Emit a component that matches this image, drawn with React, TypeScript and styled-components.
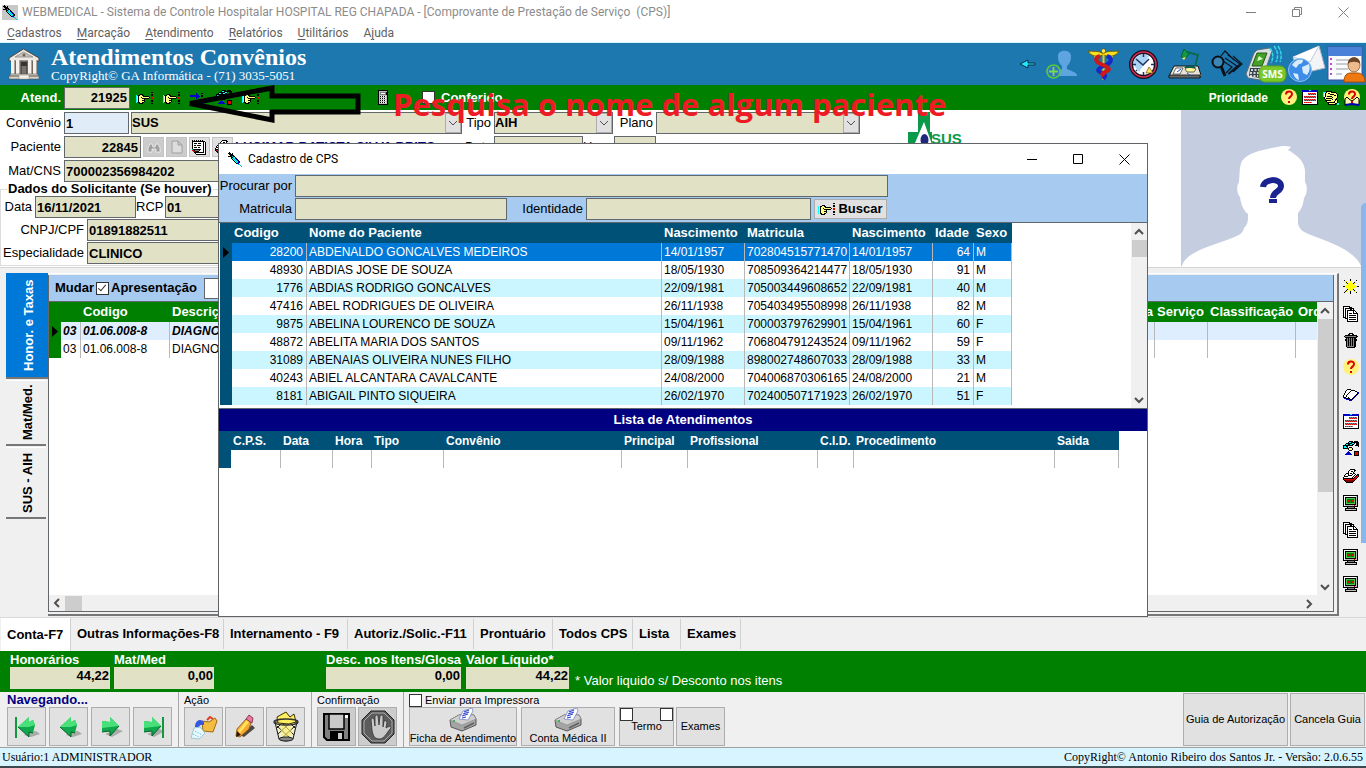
import React from "react";
import styled, { createGlobalStyle, css } from "styled-components";

const sans = `"Liberation Sans", Arial, sans-serif`;
const serif = `"Liberation Serif", "Times New Roman", serif`;
const ui = `Roboto, "Open Sans", sans-serif`;
const display = `"Open Sans", "Noto Sans", sans-serif`;
const c = {
  beige: "#e1e1c6",
  edge: "#62676b",
  sky: "#a6caf0",
  teal: "#005178",
  green: "#008000",
  face: "#f0f0f0",
  button: "#e1e1e1",
  navy: "#000080",
  select: "#0078d7",
};

const GlobalStyle = createGlobalStyle`
  *, *::before, *::after { box-sizing: border-box; }
  body { margin: 0; background: ${c.face}; font: 13px/16px ${sans}; color: #000; }
  button, input, select { font: inherit; color: inherit; border-radius: 0; margin: 0; }
  button { padding: 0; }
  svg { display: block; flex: none; }
  a { color: inherit; text-decoration: none; }
`;

/* ---------- pixel icons ---------- */

const palette: Record<string, string> = {
  k: "#000", w: "#fff", y: "#ffff80", Y: "#ffff00", r: "#e00000", c: "#00ffff", b: "#0000c8",
  g: "#808080", G: "#008000", l: "#c0c0c0", n: "#804020", t: "#00c8c8", L: "#50c850", R: "#800000",
};

function Pixels({ rows, size = 1 }: { rows: string[]; size?: number }) {
  const w = Math.max(...rows.map((r) => r.length));
  return (
    <svg width={w * size} height={rows.length * size} viewBox={`0 0 ${w} ${rows.length}`} shapeRendering="crispEdges" aria-hidden>
      {rows.flatMap((row, y) => {
        const out: React.ReactNode[] = [];
        let x = 0;
        while (x < row.length) {
          const ch = row[x];
          let n = 1;
          while (row[x + n] === ch) n++;
          if (palette[ch]) out.push(<rect key={`${x}-${y}`} x={x} y={y} width={n} height={1} fill={palette[ch]} />);
          x += n;
        }
        return out;
      })}
    </svg>
  );
}

const hand = [
  "...............kk",
  ".................",
  "....kkk........kk",
  "c.kkyykk.......kk",
  "cwkyyyykkkkkk....",
  "cwkyykyyyyyyyk.rr",
  "cwkyyykkkkkkk..rr",
  "cwkyyyyyk........",
  "cwkyyykkk......kk",
  "cwkyyyyyk......kk",
  "c.kkyykk.........",
  "...kkkk........kk",
];
const syringe = [
  "..k.............",
  ".kkk.k..........",
  "..kkkk..........",
  "...kkkk.........",
  ".kkkktkk........",
  "....kktck.......",
  "....kctcbk......",
  ".....kctcbk.....",
  "......kctcbk....",
  ".......kctcbk...",
  "........kctbk...",
  ".........kbb....",
  "...........tt...",
  ".............t..",
  "..............t.",
];
const docs = [
  "kkkkkkk.........",
  "kwwwwwkkk.......",
  "kwkkkkkkkkk.....",
  "kwkwwwwkkwk.....",
  "kwkwkkkkkkkk....",
  "kwkwkwwwwwkwk...",
  "kwkwkwwwwwkwwk..",
  "kwkwkwkkkwkkkkk.",
  "kwkwkwwwwwwwwwk.",
  "kwkwkwkkkkkkkwk.",
  "kwkwkwwwwwwwwwk.",
  "kkkwkwkkkkkkkwk.",
  "..kkkwwwwwwwwwk.",
  "....kwkkkkkkkwk.",
  "....kwwwwwwwwwk.",
  "....kkkkkkkkkkk.",
];
const trash = [
  "......kkkk......",
  ".....kk..kk.....",
  "..kkkkkkkkkkkk..",
  ".kgggggggggggkk.",
  "..kkkkkkkkkkkk..",
  "...kgkgkgkgkk...",
  "..kkgkgkgkgkkk..",
  "..kkgkgkgkgkkk..",
  "...kgkgkgkgkk...",
  "...kgkgkgkgkk...",
  "...kgkgkgkgkk...",
  "...kgkgkgkgkk...",
  "...kgkgkgkgkk...",
  "...kgggggggkk...",
  "....kkkkkkkk....",
];
const calendar = [
  "bbbbbbbccbbbbbbb",
  "bbbbbbbbbbbbbbbb",
  "kwwwwwwwwwwwwwwk",
  "kwwwwwrgrgrgrgwk",
  "kwwwwwgrgrgrgrwk",
  "kwwwwwwwwwwwwwwk",
  "kwrgrgrgrgrgrgwk",
  "kwgrgrgrgrgrgrwk",
  "kwwwwwwwwwwwwwwk",
  "kwrgrgrgrgrgrgwk",
  "kwgrgrgrgrgrgrwk",
  "kwwwwwwwwwwwwwwk",
  "kwrgrgrgrgwwwwwk",
  "kwwwwwwwwwwwwwwk",
  "kkkkkkkkkkkkkkkk",
];
const monitor = [
  "kkkkkkkkkkkkkkk.",
  "kwwwwwwwwwwwwlk.",
  "kwkkkkkkkkkkklk.",
  "kwkLLLLLLLLLklk.",
  "kwkLGGGGGGGLklk.",
  "kwkLGrrGrrGLklk.",
  "kwkLGrrGrrGLklk.",
  "kwkLGGGGGGGLklk.",
  "kwkLLLLLLLLLklk.",
  "kwkkkkkkkkkkklk.",
  "kwlllllllllrllk.",
  "kkkkkkkkkkkkkkk.",
  "....kggggggk....",
  "..kkkkkkkkkkkk..",
  "..kllllllllllk..",
  "..kkkkkkkkkkkk..",
];
const shapes = [
  "......kkkk.kkkk.",
  ".....kcckkkkkkkk",
  "...kkkkkkcck.kkk",
  "..kcckkcckk..kkk",
  "kkkkkkkkkk..kkkk",
  "kcckk..........k",
  "kccck.kkk.......",
  "kkkkkkyyyk......",
  ".....kyyyk......",
  "......kkk.......",
  ".....b.....kkkkk",
  "....bbb....krrrk",
  "...bbbbb...krrrk",
  "..bbbbbbb..krrrk",
  "...........kkkkk",
];
const redPrinter = [
  ".......kkkkk....",
  "......kwwwwkk...",
  ".....kwwkkwk....",
  ".....kwwwwk.....",
  "...kkkwkkwkk....",
  "..kwwkwwwkwwk.kk",
  ".kwwwkkkkwwk.krk",
  ".kkkkwwwwwk.krrk",
  "kwwwwwwwwk.krrk.",
  "kkkkkkkkkkkrrk..",
  "krrrrrrrrrrrk...",
  ".kRRRRRRRRRk....",
  "..kRRRRRRRk.....",
  "...kkkkkkk......",
];
const sun = [
  ".......k........",
  ".k.....k.....k..",
  "..YY...Y....Y...",
  "..YkY..Y...kY...",
  "...YkYYYYYkY....",
  "....YYYYYYY.....",
  "...YYYYYYYYY....",
  "kkYYYYYYYYYYYYkk",
  "...YYYYYYYYY....",
  "....YYYYYYY.....",
  "....kYYYYYk.....",
  "...kY..Y..Yk....",
  "..kY...k...YY...",
  ".k.....k.....k..",
  ".......k........",
];
const book = [
  "................",
  "....kkkk........",
  "...kwwwwkkkk....",
  "..kwwwwkwwwwkk..",
  "..kwwwkwwwwwwwkb",
  ".kwwwkwwwwwwwwkb",
  ".kwwkwwwwwwwwkb.",
  "kwwkwwwwwwwwkb..",
  "kwwkwwwwwwwkb...",
  "bkkwwkwwwwkb....",
  ".bbkkkkwwkb.....",
  "...bbbbkkb......",
  "......bbb.......",
];
const goBlue = [
  "......b....kk...",
  "......bb........",
  "bbbbbbbbb..kk...",
  "bbbbbbbbbb.kk...",
  "......bbb.......",
  "......b....nn...",
  "...........nn...",
  "................",
  "...........kk...",
  "...........kk...",
];
const notepad = [
  "k.k.k.k.k.k.....",
  "kkkkkkkkkkkkk...",
  "kwwwwwwwwwwkwk..",
  "kwkkkwkkkwwkwk..",
  "kwwwwwwwwwwkwk..",
  "kwkkwkkkkwwkwk..",
  "kwwwwwwwwwwkwk..",
  "kwkkkwkkwwwkwk..",
  "kwwwwwwwwwwkwk..",
  "tkkkkkkkkwwkwk..",
  "rrkggggkwwwkwk..",
  ".rrkkkkwwwwkwk..",
  "..kkkkkkkkkkwk..",
  "...kwwwwwwwwwk..",
  "....kkkkkkkkkk..",
];
const calculator = [
  "kkkkkkkkkk",
  "kllllllllk",
  "klggggggkk",
  "klgwwwwgkk",
  "klggggggkk",
  "kllllllllk",
  "klkwkwkwlk",
  "kllllllllk",
  "klkwkwkwlk",
  "kllllllllk",
  "klkwkwkwlk",
  "kllllllllk",
  "klkwkwkwlk",
  "kllllllllk",
  "kkkkkkkkkk",
];
const pointHand = [
  "...kkkkkk.......",
  "ccckyyyykkkkk...",
  "cwkyykkyyyyyyk..",
  "cwkyyyykkkkyyyk.",
  "cwkyyyyyyyykkyk.",
  "cwkykkkkkyyyyyk.",
  ".kyyyyyyykyyyyk.",
  ".kykkkkkkyyyyk..",
  "..kyyyyyykyykk..",
  "..kkkkkkyyyykyk.",
  "...kyyyyyyykyyk.",
  "....kkkkkkkkyyk.",
  ".....kyyyyyykkcc",
  ".....kkkkkkkk.cc",
];

function Question({ reader = false }: { reader?: boolean }) {
  return (
    <svg width="16" height="17" viewBox="0 0 16 17" aria-hidden>
      <circle cx="8" cy="8" r="8" fill="#fff27a" />
      {reader && <path d="M1 16V10l2-2 2 2 3 2 3-2 2-2 2 2v6l-7-1z" fill="#fff8b0" stroke="#000" strokeWidth="1" />}
      {reader && <path d="M1 16l7-1 7 1" stroke="#0000b0" strokeWidth="2" fill="none" />}
      <path d="M5 5.500C5 1.500 11 1.500 11 5c0 2.600-3 2.600-3 5" fill="none" stroke="#d80000" strokeWidth="2" />
      <rect x="7" y="12" width="2" height="2" fill="#d80000" />
    </svg>
  );
}

function Temple() {
  return (
    <svg width="32" height="32" viewBox="0 0 32 32" aria-hidden>
      <path d="M1 10L15.500 1 31 10v3H1z" fill="#ece8e2" stroke="#4a4540" />
      <path d="M7 9l8.500-5L25 9z" fill="#c8c2ba" stroke="#857f78" strokeWidth=".7" />
      <circle cx="16" cy="7" r="1.500" fill="#6a645e" />
      <path d="M3 13h26v13H3z" fill="#6e6861" />
      {[3, 8, 20, 25].map((x) => (
        <g key={x}>
          <rect x={x} y="12" width="4" height="15" fill="#f4f1ec" />
          <rect x={x + 3} y="12" width="1" height="15" fill="#aaa49c" />
        </g>
      ))}
      <rect x="13" y="14" width="6" height="12" fill="#37332f" />
      <rect x="13.500" y="18" width="5" height="8" fill="#f0ede8" opacity=".35" />
      <path d="M2 26h28v2H2zM1 28h30v3H1z" fill="#d9d4cc" stroke="#5b554e" strokeWidth=".6" />
      <path d="M11 27h10v4H11z" fill="#f2efe9" stroke="#8d877f" strokeWidth=".5" />
    </svg>
  );
}

const Arrow = () => (
  <svg width="17" height="10" viewBox="0 0 17 10" aria-hidden>
    <path d="M1 5l8-4v3h7v2H9v3z" fill="#20e8f8" stroke="#0a2a48" strokeWidth="1" />
  </svg>
);
const AddPerson = () => (
  <svg width="32" height="32" viewBox="0 0 32 32" aria-hidden>
    <path d="M12 8c0-7 13-7 13 0 0 6-2 8-4 10v3c4 2 9 3 10 6v1H9c1-4 3-5 7-7v-3c-2-2-4-4-4-10z" fill="#5ea4e0" />
    <circle cx="7.500" cy="23.500" r="6.500" fill="#3a6fc8" stroke="#4ccc3c" strokeWidth="1.700" />
    <path d="M7.500 19v9M3 23.500h9" stroke="#6ee048" strokeWidth="1.800" />
  </svg>
);
const Caduceus = () => (
  <svg width="31" height="33" viewBox="0 0 31 33" aria-hidden>
    <path d="M15 7C10 9 3 9 0 3c5 1 11-1 15 3 4-4 11-2 16-3-3 6-10 6-16 4z" fill="#f8e020" stroke="#5a4a00" strokeWidth=".8" />
    <path d="M3 4l8 3M28 4l-8 3M6 9l6-1M25 9l-6-1" stroke="#f8e020" strokeWidth="1" />
    <path d="M15.500 3v29" stroke="#f0c800" strokeWidth="2" />
    <circle cx="15.500" cy="3" r="2.200" fill="#ffe850" stroke="#504000" strokeWidth=".6" />
    <path d="M19 8c6 2 5 7-3 10s-7 5-2 7 3 4 1 6" fill="none" stroke="#1828c8" strokeWidth="4" />
    <path d="M12 8c-6 2-5 6 3 9s7 5 2 7-2 3-1 4" fill="none" stroke="#d01818" strokeWidth="4" />
  </svg>
);
const Clock = () => (
  <svg width="29" height="29" viewBox="0 0 29 29" aria-hidden>
    <circle cx="14.500" cy="14.500" r="12.500" fill="#fff" stroke="#14141e" strokeWidth="4" />
    <circle cx="14.500" cy="14.500" r="12.500" fill="none" stroke="#e02858" strokeWidth="1.500" />
    <path d="M4 14A10.500 10.500 0 0120 6L10 22z" fill="#a8d4f4" />
    <path d="M7 9l7 6 6-6M14.500 4v3M14.500 22v3M4 14.500h3M22 14.500h3M8 20l-1 1" stroke="#203060" strokeWidth="1.500" fill="none" />
    <path d="M17 23l3-6 4 6z" fill="#ffe860" stroke="#705000" strokeWidth=".7" />
  </svg>
);
const Desk = () => (
  <svg width="33" height="32" viewBox="0 0 33 32" aria-hidden>
    <path d="M6 18h24l3 9v2H1l1-3z" fill="#e6e2da" stroke="#141414" />
    <path d="M1 27h31v3H1z" fill="#686868" stroke="#101010" strokeWidth=".8" />
    <path d="M8 20h7l-3 6H5z" fill="#fff" stroke="#333" strokeWidth=".7" />
    <path d="M17 21c4-3 8-1 11 0l-2 3h-7z" fill="#fff8a0" stroke="#302a10" strokeWidth=".7" />
    <path d="M18 18h8l2 2H16z" fill="#0c5c4c" />
    <path d="M13 9l3-8 5 5-3 4z" fill="#149848" stroke="#062" />
    <path d="M19 4l11 3-3 11" fill="none" stroke="#0a6a50" strokeWidth="2" />
    <path d="M14 10l2 2 2-3" fill="#ffef60" />
    <path d="M19 25l4 3M9 24l4-3" stroke="#1850c0" strokeWidth="1" />
  </svg>
);
const SearchPages = () => (
  <svg width="32" height="28" viewBox="0 0 32 28" aria-hidden>
    <path d="M10 6l4-5 9 9M17 5l12 9-11 10M14 8l12 8-9 8M12 11l9 6-6 6M22 6l9 8-9 8" fill="none" stroke="#0b1420" strokeWidth="1.200" />
    <circle cx="7" cy="12" r="5.500" fill="#3a86b4" stroke="#0b1018" strokeWidth="2" />
    <path d="M10 16l4 10" stroke="#0b1018" strokeWidth="3" />
  </svg>
);
const Sms = () => (
  <svg width="41" height="38" viewBox="0 0 41 38" aria-hidden>
    <path d="M11 5l12-2 3 3-9 26-3 3-12-2-2-4L8 8z" fill="#d8dee2" stroke="#5a6a72" />
    <path d="M11 8h10l-5 13H6z" fill="#44a028" stroke="#245c14" />
    <path d="M13 11l4 3-6 2z" fill="#d8ffc0" />
    <path d="M4 23h12l-3 10-10-2z" fill="#39444a" />
    <path d="M5 25h9M4 28h9M4 31h8" stroke="#fff" strokeWidth="1.500" strokeDasharray="2 1.500" />
    <path d="M24 3q5 7 1 15M28 1q6 8 2 16M32 1q5 8 2 16" stroke="#30d8e8" strokeWidth="1.500" fill="none" strokeDasharray="4 1" />
    <rect x="13" y="21" width="27" height="16" rx="6" fill="#7ac828" stroke="#5aa018" />
    <text x="26.500" y="33" fontFamily={display} fontSize="10" fontWeight="700" fill="#fff" textAnchor="middle">SMS</text>
  </svg>
);
const MailGlobe = () => (
  <svg width="38" height="38" viewBox="0 0 38 38" aria-hidden>
    <path d="M5 12L31 1l6 22-26 6z" fill="#f2f4f8" stroke="#b0b8c8" />
    <path d="M5 12l17 5 9-16" fill="#fff" stroke="#c0c8d8" />
    <circle cx="12" cy="25" r="11.500" fill="#3c8ce8" stroke="#8cc0f4" />
    <path d="M4 20q5-7 11-5 0 4-4 4l-3 4zM14 22l7-3q2 6-2 11l-4-2zM5 28l5 1 1 6q-4-1-6-7z" fill="#d8ecfc" />
  </svg>
);
const Card = () => (
  <svg width="39" height="37" viewBox="0 0 39 37" aria-hidden>
    <rect x="1" y="1" width="34" height="33" fill="#fafbfd" stroke="#3c50a0" />
    <rect x="1" y="1" width="34" height="9" fill="#4a80d8" />
    <path d="M3 13h2M3 18h2M3 23h2M3 28h2" stroke="#b850c8" strokeWidth="2" />
    <path d="M9 14h18M9 18h16M9 23h12M9 28h6" stroke="#c8ccd2" strokeWidth="2" />
    <path d="M17 36c0-7 3-9 7-9h6c5 0 8 3 8 9z" fill="#f07810" stroke="#a84c00" />
    <ellipse cx="27" cy="19" rx="6" ry="7" fill="#eebb8c" stroke="#8c5a30" strokeWidth=".8" />
    <path d="M21 18c-1-9 13-9 12 0-2-3-10-3-12 0z" fill="#6e4626" />
  </svg>
);
const Sus = () => (
  <svg width="56" height="56" viewBox="0 0 56 56" aria-hidden>
    <path d="M10 2h12v20H10zM0 22h24v14H0z" fill="#0a9a4a" />
    <path d="M16 12l10 28H4z" fill="#fff" />
    <ellipse cx="16.500" cy="30" rx="4" ry="6" fill="#20287c" />
    <text x="23" y="34" fontFamily={sans} fontSize="15" fontWeight="700" fill="#0a9a4a">SUS</text>
  </svg>
);
const Portrait = () => (
  <svg width="185" height="156" viewBox="0 0 185 156" aria-hidden>
    <rect width="185" height="156" fill="#c5cde0" />
    <path
      d="M1 156c3-12 22-18 42-25 14-5 19-7 20-13 3-3 4-6 4-10V104c-5-4-7-10-8-17-3-3-4-11-1-15 1-10 0-14 3-21 7-10 26-12 40-15 4 0 7 0 9 1l-3 3c7 4 16 10 17 20v12c3 4 2 13-1 16-1 7-2 10-6 15v11c2 6 5 8 13 11 20 8 43 15 50 31z"
      fill="#fff"
    />
    <path d="M82 77c1-9 18-9 18-1 0 6-8 5-8 12" fill="none" stroke="#1a2490" strokeWidth="6" />
    <rect x="88" y="89" width="8" height="4" fill="#1a2490" />
  </svg>
);

const NavArrow = ({ dir, bar }: { dir: "left" | "right"; bar?: boolean }) => (
  <svg width="28" height="26" viewBox="0 0 28 26" aria-hidden>
    {dir === "left" ? (
      <>
        <path d="M15 18l8-1 4 3-9 3-7-2z" fill="#a8aca8" />
        <path d="M5 13L16 3v5l4-2 2 5-2 8-4-1v5z" fill="#10a84c" />
        <path d="M5 13L16 3v5l4-2 2 5-6 2z" fill="#48e078" />
        <path d="M5 13L16 23v-5l4 1" fill="none" stroke="#08602c" />
      </>
    ) : (
      <>
        <path d="M8 20l12-5 6 2-11 6z" fill="#a8aca8" />
        <path d="M5 7l8 1V3l9 9-9 10v-5l-8 1z" fill="#10a84c" />
        <path d="M5 7l8 1V3l9 9-9 1-8 1z" fill="#48e078" />
        <path d="M5 18l8-1v5l9-10" fill="none" stroke="#08602c" />
      </>
    )}
    {bar && <rect x={dir === "left" ? 2 : 23} y="3" width="2" height="21" fill="#10983c" />}
  </svg>
);
const NewDoc = () => (
  <svg width="30" height="28" viewBox="0 0 30 28" aria-hidden>
    <path d="M13 8l7 1 6-4 2 3-4 11-10-1z" fill="#f4bc40" stroke="#a06c10" />
    <path d="M18 7l3-3 3 2" stroke="#e04020" strokeWidth="2" fill="none" />
    <path d="M15 9c-6-5-9 1-9 5l4 1q0-4 5-3z" fill="#3458e0" />
    <path d="M5 15l6-1 5 6-6 6-8-1z" fill="#e8faff" stroke="#98c8d4" />
    <path d="M6 18l7 4M4 21l6 3" stroke="#58b8d0" strokeDasharray="1 1" />
  </svg>
);
const Pencil = () => (
  <svg width="26" height="28" viewBox="0 0 26 28" aria-hidden>
    <path d="M8 22l12-10 3 3-11 9z" fill="#4c4844" />
    <path d="M5 16L14 6l5 4-2 6-9 8-4-1z" fill="#f8a830" stroke="#805008" strokeWidth=".8" />
    <path d="M7 19l9-11" stroke="#ffe060" strokeWidth="3" />
    <path d="M14 6l3-4 4 3-1 5z" fill="#e878a0" stroke="#802040" strokeWidth=".8" />
    <path d="M5 18l4 4-5 2z" fill="#301808" />
  </svg>
);
const Basket = () => (
  <svg width="28" height="31" viewBox="0 0 28 31" aria-hidden>
    <path d="M3 11h22l-4 17q-7 4-14 0z" fill="#f4f0c8" stroke="#111" />
    <path d="M5 15l14 13M9 11l13 13M17 11l7 7M23 15L9 28M19 11L6 23M11 11l-7 7" stroke="#222" strokeWidth="1" />
    <path d="M8 16l5-3 6 3 1 8-9 2z" fill="#fff06c" opacity=".6" />
    <path d="M5 6l9-5 4 5 4-3 2 8-7 2-11-1z" fill="#ffef60" stroke="#3a3000" />
    <ellipse cx="14" cy="11" rx="12" ry="3" fill="none" stroke="#333" strokeWidth="1.500" />
    <ellipse cx="14" cy="28" rx="7" ry="2" fill="#888" stroke="#222" />
  </svg>
);
const Floppy = () => (
  <svg width="27" height="28" viewBox="0 0 27 28" aria-hidden>
    <path d="M1 1h25v26H4l-3-3z" fill="#808080" stroke="#000" strokeWidth="2" />
    <rect x="6" y="1" width="15" height="15" fill="#c8c8c8" stroke="#000" strokeWidth="1.500" />
    <rect x="7" y="18" width="14" height="9" fill="#000" />
    <rect x="15" y="20" width="4" height="6" fill="#c8c8c8" />
    <rect x="22" y="2" width="3" height="3" fill="#fff" />
  </svg>
);
const StopHand = () => (
  <svg width="34" height="34" viewBox="0 0 34 34" aria-hidden>
    <path d="M10 1h14l9 9v14l-9 9H10l-9-9V10z" fill="#5c5c5c" stroke="#222" />
    <path d="M11 3h12l8 8v12l-8 8H11l-8-8V11z" fill="none" stroke="#a8a8a8" />
    <path d="M10 9q2-2 3 0l1 7V6q2-2 3 0l1 9 1-9q2-2 3 0v11l1-6q2-1 3 1l-1 6c3-2 5-2 5 0-4 4-6 10-11 11-7 0-7-5-8-9z" fill="#cacaca" stroke="#333" strokeWidth=".8" />
  </svg>
);
const Printer = () => (
  <svg width="28" height="24" viewBox="0 0 28 24" aria-hidden>
    <path d="M1 12l9-5h15l2 4v6L13 23 2 19z" fill="#a4a4a4" stroke="#585858" />
    <path d="M1 12l9-5h15l2 4-14 6z" fill="#cfcfcf" stroke="#8a8a8a" strokeWidth=".6" />
    <path d="M10 11l4-8 9-3 1 3-5 9z" fill="#fff" stroke="#7888c0" strokeWidth=".8" />
    <path d="M15 4l5-2M14 6l6-2M13 8l6-2M13 10l4-1" stroke="#3048d0" strokeWidth="1.200" />
    <rect x="4" y="12" width="2" height="2" fill="#40b050" />
    <path d="M15 20l10-5" stroke="#606060" strokeWidth="1.500" />
  </svg>
);
const Chevron = ({ d }: { d: "up" | "down" | "left" | "right" }) => {
  const p = { up: "M1 7l4-4 4 4", down: "M1 3l4 4 4-4", left: "M7 1L3 5l4 4", right: "M3 1l4 4-4 4" }[d];
  return (
    <svg width="10" height="10" viewBox="0 0 10 10" aria-hidden>
      <path d={p} fill="none" stroke="#505050" strokeWidth="2" />
    </svg>
  );
};
const PickChevron = () => (
  <svg width="10" height="10" viewBox="0 0 10 10" aria-hidden>
    <path d="M1 3l4 4 4-4" fill="none" stroke="#505050" />
  </svg>
);

/* ---------- layout pieces ---------- */

const Page = styled.div`
  position: relative;
  min-height: 100vh;
  display: flex;
  flex-direction: column;
  overflow: hidden;
  border-bottom: 2px solid #3c4a50;
`;
const TitleBar = styled.header`
  display: flex;
  align-items: center;
  height: 24px;
  padding-left: 2px;
  gap: 4px;
  background: #fff;
  color: #8c8c8c;
  font: 12px/24px ${ui};
  white-space: pre;
`;
const AppIcon = styled.span`
  background: #c8c8c8;
  width: 16px;
  overflow: hidden;
`;
const WinControls = styled.div<{ $dark?: boolean }>`
  display: flex;
  margin-left: auto;
  color: ${(p) => (p.$dark ? "#000" : "#808080")};
`;
const WinButton = styled.button`
  display: grid;
  place-items: center;
  width: 46px;
  height: 22px;
  border: 0;
  background: none;
`;
const MenuBar = styled.nav`
  display: flex;
  gap: 15px;
  height: 19px;
  padding-left: 7px;
  background: #fff;
  color: #606060;
  font: 12px/18px ${ui};
  border-bottom: 1px solid #d8f4ff;
`;
const Mnemonic = styled.span`
  text-decoration: underline;
  text-underline-offset: 2px;
`;
const Banner = styled.div`
  display: flex;
  align-items: center;
  height: 42px;
  padding: 0 0 0 8px;
  gap: 11px;
  background: #1e78b0;
  color: #fff;
`;
const BannerTitle = styled.h1`
  margin: 0;
  font: bold 24px/24px ${serif};
`;
const BannerSub = styled.div`
  font: 13px/14px ${serif};
`;
const BannerTools = styled.div`
  display: flex;
  align-items: center;
  gap: 10px;
  margin-left: auto;
`;
const BannerTight = styled.div`
  display: flex;
  align-items: center;
  gap: 1px;
  margin-left: -7px;
`;
const PlainButton = styled.button`
  display: grid;
  place-items: center;
  border: 0;
  background: none;
`;
const GreenBar = styled.div`
  display: flex;
  align-items: center;
  height: 25px;
  padding-left: 4px;
  background: ${c.green};
  color: #fff;
  font-weight: bold;
`;
const Label = styled.label<{ $w: number }>`
  flex: none;
  width: ${(p) => p.$w}px;
  padding-right: 3px;
  text-align: right;
  white-space: nowrap;
`;
const Field = styled.input<{ $w: number; $right?: boolean; $bg?: string; $flat?: boolean }>`
  flex: none;
  width: ${(p) => p.$w}px;
  height: 22px;
  padding: ${(p) => (p.$flat ? "0 1px 5px" : "0 2px 0 1px")};
  border: ${(p) => (p.$flat ? "0" : `1px solid ${c.edge}`)};
  background: ${(p) => p.$bg ?? c.beige};
  color: #000;
  font-weight: bold;
  text-align: ${(p) => (p.$right ? "right" : "left")};
  outline: 0;
`;
const Tools = styled.div`
  display: flex;
  align-items: center;
  gap: 10px;
  padding-left: 6px;
`;
const CalcSlot = styled.div`
  padding-left: 119px;
`;
const Check = styled.input.attrs({ type: "checkbox" })`
  appearance: none;
  flex: none;
  width: 13px;
  height: 13px;
  border: 1px solid #333;
  background: #fff;
  &:checked::after {
    content: "";
    display: block;
    width: 4px;
    height: 8px;
    margin: 0 0 0 3px;
    border: solid #333;
    border-width: 0 1px 1px 0;
    transform: rotate(40deg);
  }
`;
const Conferido = styled.label`
  display: flex;
  align-items: center;
  gap: 6px;
  padding-left: 34px;
`;
const Priority = styled.div`
  display: flex;
  align-items: center;
  gap: 5px;
  margin-left: auto;
  padding-right: 6px;
  font-size: 12px;
`;
const PriorityText = styled.span`
  margin-right: 8px;
`;

const FormArea = styled.section`
  display: flex;
  height: 157px;
  background: #fff;
`;
const FormColumn = styled.div`
  flex: none;
  width: 900px;
  padding-top: 2px;
`;
const FormRow = styled.div<{ $tight?: boolean }>`
  display: flex;
  align-items: center;
  height: 22px;
  margin-bottom: ${(p) => (p.$tight ? 1 : 2)}px;
`;
const PickBox = styled.span<{ $w: number; $gap?: number }>`
  position: relative;
  flex: none;
  width: ${(p) => p.$w}px;
  height: 22px;
  margin-left: ${(p) => p.$gap ?? 0}px;
  svg {
    position: absolute;
    right: 4px;
    top: 6px;
    z-index: 1;
    pointer-events: none;
  }
  &::after {
    content: "";
    position: absolute;
    inset: 1px 1px 1px auto;
    width: 16px;
    background: ${c.button};
    border: 1px solid #adadad;
    pointer-events: none;
  }
`;
const Pick = styled.select`
  appearance: none;
  width: 100%;
  height: 22px;
  padding: 0;
  border: 1px solid ${c.edge};
  background: ${c.beige};
  font-weight: bold;
  outline: 0;
`;
const MiniButton = styled.button<{ $off?: boolean }>`
  display: grid;
  place-items: center;
  width: 21px;
  height: 20px;
  margin-left: 2px;
  border: 1px solid #c4c4c4;
  background: ${(p) => (p.$off ? "#cccccc" : c.button)};
  overflow: hidden;
`;
const PatientName = styled.strong`
  width: 232px;
  padding-left: 2px;
  color: ${c.navy};
  white-space: nowrap;
`;
const Requester = styled.fieldset`
  margin: -2px 0 0;
  padding: 0;
  border: 1px solid #dcdcdc;
  min-width: 0;
  legend {
    margin-left: 6px;
    padding: 0 1px;
    font-weight: bold;
    line-height: 14px;
  }
`;
const LogoSlot = styled.div`
  padding-left: 8px;
`;
const PhotoSlot = styled.div`
  margin-left: auto;
`;

const Work = styled.main`
  flex: 1;
  display: flex;
  min-height: 340px;
  padding: 5px 0 1px 4px;
  border-top: 1px solid #d4d4d4;
`;
const SideTabs = styled.div`
  display: flex;
  flex-direction: column;
  flex: none;
  width: 44px;
  gap: 1px;
  padding-left: 2px;
`;
const SideTab = styled.button<{ $h: number; $on?: boolean }>`
  width: ${(p) => (p.$on ? 42 : 40)}px;
  height: ${(p) => p.$h}px;
  padding-right: 4px;
  border: 0;
  border-top: 2px solid #777;
  border-bottom: 1px solid ${(p) => (p.$on ? c.select : "#fff")};
  background: ${(p) => (p.$on ? c.select : c.face)};
  color: ${(p) => (p.$on ? "#fff" : "#000")};
  font-weight: bold;
  writing-mode: vertical-rl;
  rotate: 180deg;
`;
const Panel = styled.div`
  flex: 1;
  min-width: 0;
  display: flex;
  padding: 1px 3px 2px 0;
  border-right: 2px solid #777;
  border-bottom: 2px solid #777;
  border-top: 1px solid #fff;
`;
const PanelInner = styled.div`
  flex: 1;
  min-width: 0;
  display: flex;
  flex-direction: column;
  border: 1px solid ${c.edge};
  border-top: 0;
  background: #fff;
`;
const PanelBar = styled.div`
  display: flex;
  align-items: center;
  gap: 2px;
  height: 27px;
  padding-left: 6px;
  background: ${c.sky};
  border-bottom: 1px solid ${c.edge};
  font-weight: bold;
`;
const PanelBox = styled.input`
  width: 120px;
  height: 21px;
  margin-left: 5px;
  border: 1px solid ${c.edge};
  background: #fff;
`;
const GridArea = styled.div`
  flex: 1;
  display: flex;
  min-height: 0;
`;
const GridMain = styled.div`
  flex: 1;
  min-width: 0;
`;

const Grid = styled.table<{ $head: string; $headH: number; $headSize: number; $full?: boolean }>`
  table-layout: fixed;
  border-spacing: 0;
  align-self: flex-start;
  width: ${(p) => (p.$full ? "100%" : "auto")};
  th {
    height: ${(p) => p.$headH}px;
    padding: 0 2px;
    background: ${(p) => p.$head};
    color: #fff;
    font-size: ${(p) => p.$headSize}px;
    text-align: left;
    white-space: nowrap;
    overflow: hidden;
  }
  td {
    height: 18px;
    padding: 0 0 0 2px;
    border-right: 1px solid #b8b8b8;
    font-size: 12px;
    line-height: 18px;
    white-space: nowrap;
    overflow: hidden;
  }
  td:first-child {
    padding: 0 0 0 3px;
    border: 0;
    background: ${(p) => p.$head};
  }
`;
const ItemRow = styled.tr<{ $on?: boolean }>`
  td {
    background: ${(p) => (p.$on ? "#dfeeff" : "#fff")};
    font-weight: ${(p) => (p.$on ? "bold" : "normal")};
    font-style: ${(p) => (p.$on ? "italic" : "normal")};
  }
  td:last-child { border-right: 0; }
`;
const HeadRight = styled.th`
  && { text-align: right; }
`;
const PatientRow = styled.tr<{ $on?: boolean; $alt?: boolean }>`
  color: ${(p) => (p.$on ? "#fff" : "#000")};
  td {
    background: ${(p) => (p.$on ? c.select : p.$alt ? "#ccf6ff" : "#fff")};
  }
`;
const NumCell = styled.td`
  text-align: right;
  && { padding-right: 3px; }
`;
const Marker = () => (
  <svg width="6" height="11" viewBox="0 0 6 11" aria-hidden>
    <path d="M0 0l6 5.500L0 11z" />
  </svg>
);

const ScrollV = styled.div`
  display: flex;
  flex-direction: column;
  align-items: center;
  flex: none;
  width: 16px;
  background: ${c.face};
`;
const ScrollH = styled.div`
  display: flex;
  align-items: center;
  height: 16px;
  padding-right: 16px;
  background: ${c.face};
`;
const ScrollButton = styled.button<{ $end?: boolean }>`
  display: grid;
  place-items: center;
  width: 16px;
  height: 17px;
  border: 0;
  background: none;
  ${(p) => p.$end && css`margin: auto 0 0 auto;`}
`;
const Thumb = styled.div<{ $w: number; $h: number }>`
  width: ${(p) => p.$w}px;
  height: ${(p) => p.$h}px;
  background: #cdcdcd;
`;
const RightTools = styled.div`
  display: flex;
  flex-direction: column;
  flex: none;
  width: 27px;
  padding: 0 0 0 4px;
`;
const RightTool = styled.button`
  display: flex;
  align-items: center;
  width: 17px;
  height: 27px;
  border: 0;
  background: none;
`;

const TabBar = styled.div`
  display: flex;
  align-items: flex-start;
  height: 34px;
  padding: 0 1px;
  border-top: 1px solid #d8d8d8;
`;
const Tab = styled.button<{ $w: number; $on?: boolean }>`
  width: ${(p) => p.$w}px;
  height: ${(p) => (p.$on ? 33 : 30)}px;
  margin-top: ${(p) => (p.$on ? 0 : 1)}px;
  padding: 0 0 0 6px;
  border: 0;
  border-right: 1px solid #d0d0d0;
  background: ${(p) => (p.$on ? "#fff" : c.face)};
  font-weight: bold;
  text-align: left;
  white-space: nowrap;
`;
const Totals = styled.div`
  display: flex;
  align-items: flex-start;
  height: 41px;
  padding: 1px 0 0 10px;
  background: ${c.green};
  color: #fff;
`;
const Total = styled.label<{ $gap: number }>`
  display: flex;
  flex-direction: column;
  margin-right: ${(p) => p.$gap}px;
  font-weight: bold;
  line-height: 15px;
  white-space: nowrap;
`;
const TotalNote = styled.span`
  padding-top: 21px;
`;
const Actions = styled.div`
  display: flex;
  height: 56px;
  padding-left: 2px;
  font-size: 11px;
  border-bottom: 1px solid #a0a0a0;
`;
const Group = styled.div`
  padding: 1px 6px 0 5px;
  border-right: 1px solid #a8a8a8;
`;
const OpenGroup = styled(Group)`
  border: 0;
`;
const GroupName = styled.div<{ $strong?: boolean }>`
  height: 14px;
  line-height: 14px;
  ${(p) =>
    p.$strong &&
    css`
      color: ${c.navy};
      font-weight: bold;
      font-size: 13px;
    `}
`;
const SendTo = styled.label`
  display: flex;
  align-items: center;
  gap: 3px;
  height: 14px;
`;
const Buttons = styled.div<{ $gap?: number }>`
  display: flex;
  gap: ${(p) => p.$gap ?? 2}px;
`;
const ToolButton = styled.button<{ $w?: number; $h?: number; $off?: boolean }>`
  display: flex;
  flex-direction: column;
  align-items: center;
  justify-content: center;
  width: ${(p) => p.$w ?? 39}px;
  height: ${(p) => p.$h ?? 39}px;
  border: 1px solid #adadad;
  background: ${(p) => (p.$off ? "#cccccc" : c.button)};
  line-height: 13px;
  white-space: nowrap;
`;
const TermBox = styled.div`
  position: relative;
  input { position: absolute; top: 1px; left: 1px; }
  input + input { left: auto; right: 1px; }
`;
const GuideButtons = styled.div`
  display: flex;
  gap: 2px;
  margin-left: auto;
  padding: 1px 1px 0 0;
`;
const Status = styled.footer`
  display: flex;
  justify-content: space-between;
  height: 18px;
  padding: 0 3px 0 2px;
  background: #d8f4ff;
  font: 12px/18px ${serif};
`;

const PageScroll = styled.div`
  position: absolute;
  right: 0;
  top: 203px;
  width: 5px;
  height: 340px;
  border-radius: 5px 0 0 0;
  background: #8ab6ea;
`;
const ArrowMark = styled.div`
  position: absolute;
  left: 185px;
  top: 84px;
  pointer-events: none;
`;
const Note = styled.p`
  position: absolute;
  left: 393px;
  top: 86px;
  margin: 0;
  color: #ed1c24;
  font: bold 31px/36px ${display};
  white-space: nowrap;
  pointer-events: none;
`;

const Dialog = styled.section`
  position: absolute;
  left: 218px;
  top: 143px;
  display: flex;
  flex-direction: column;
  width: 930px;
  min-height: 474px;
  border: 1px solid #606468;
  background: #fff;
`;
const DialogTitle = styled.div`
  display: flex;
  align-items: center;
  gap: 5px;
  height: 30px;
  padding: 0 0 0 8px;
  font: 12px/30px ${ui};
`;
const SearchArea = styled.div`
  height: 48px;
  background: ${c.sky};
`;
const SearchRow = styled.div`
  display: flex;
  align-items: center;
  height: 23px;
`;
const SearchButton = styled.button`
  display: flex;
  align-items: center;
  justify-content: center;
  gap: 3px;
  width: 73px;
  height: 20px;
  margin-left: 3px;
  border: 1px solid #adadad;
  background: ${c.button};
  font-weight: bold;
`;
const PatientGrid = styled.div`
  display: flex;
  justify-content: space-between;
  height: 187px;
  padding-left: 1px;
  border-top: 1px solid ${c.edge};
  border-bottom: 1px solid ${c.edge};
`;
const ListTitle = styled.h2`
  margin: 0;
  background: ${c.navy};
  color: #fff;
  font: bold 13px/22px ${sans};
  text-align: center;
`;

/* ---------- data ---------- */

const patients = [
  ["28200", "ABDENALDO GONCALVES MEDEIROS", "14/01/1957", "702804515771470", "64", "M"],
  ["48930", "ABDIAS JOSE DE SOUZA", "18/05/1930", "708509364214477", "91", "M"],
  ["1776", "ABDIAS RODRIGO GONCALVES", "22/09/1981", "705003449608652", "40", "M"],
  ["47416", "ABEL RODRIGUES DE OLIVEIRA", "26/11/1938", "705403495508998", "82", "M"],
  ["9875", "ABELINA LOURENCO DE SOUZA", "15/04/1961", "700003797629901", "60", "F"],
  ["48872", "ABELITA MARIA DOS SANTOS", "09/11/1962", "706804791243524", "59", "F"],
  ["31089", "ABENAIAS OLIVEIRA NUNES FILHO", "28/09/1988", "898002748607033", "33", "M"],
  ["40243", "ABIEL ALCANTARA CAVALCANTE", "24/08/2000", "704006870306165", "21", "M"],
  ["8181", "ABIGAIL PINTO SIQUEIRA", "26/02/1970", "702400507171923", "51", "F"],
];
const visits: [string, number][] = [
  ["C.P.S.", 50], ["Data", 52], ["Hora", 39], ["Tipo", 72], ["Convênio", 178], ["Principal", 66],
  ["Profissional", 130], ["C.I.D.", 36], ["Procedimento", 201], ["Saida", 64],
];
const tabs: [string, number][] = [
  ["Conta-F7", 70], ["Outras Informações-F8", 153], ["Internamento - F9", 124], ["Autoriz./Solic.-F11", 126],
  ["Prontuário", 79], ["Todos CPS", 80], ["Lista", 48], ["Exames", 60],
];
const sideIcons: [string, React.ReactNode][] = [
  ["Novo", <Pixels rows={sun} />], ["Copiar", <Pixels rows={docs} />], ["Excluir", <Pixels rows={trash} />],
  ["Ajuda", <Question />], ["Livro", <Pixels rows={book} />], ["Agenda", <Pixels rows={calendar} />],
  ["Formas", <Pixels rows={shapes} />], ["Imprimir", <Pixels rows={redPrinter} />], ["Monitor", <Pixels rows={monitor} />],
  ["Documentos", <Pixels rows={docs} />], ["Tela 1", <Pixels rows={monitor} />], ["Tela 2", <Pixels rows={monitor} />],
];

function WindowControls({ dark }: { dark?: boolean }) {
  return (
    <WinControls $dark={dark}>
      <WinButton aria-label="Minimizar">
        <svg width="11" height="11"><path d="M0 5.500h10" stroke="currentColor" /></svg>
      </WinButton>
      <WinButton aria-label="Restaurar">
        <svg width="11" height="11" fill="none" stroke="currentColor">
          {dark ? <path d="M.5.500h9v9h-9z" /> : <path d="M.5 2.500h7v7h-7zM2.500 2.500v-2h7v7h-2" />}
        </svg>
      </WinButton>
      <WinButton aria-label="Fechar">
        <svg width="11" height="11"><path d="M.5.500l10 10M10.500.500l-10 10" stroke="currentColor" /></svg>
      </WinButton>
    </WinControls>
  );
}

function Combo({ id, value, w, gap }: { id: string; value: string; w: number; gap?: number }) {
  return (
    <PickBox $w={w} $gap={gap}>
      <Pick id={id} aria-label={id} defaultValue={value}>
        <option>{value}</option>
      </Pick>
      <PickChevron />
    </PickBox>
  );
}

function SearchDialog() {
  return (
    <Dialog role="dialog" aria-label="Cadastro de CPS">
      <DialogTitle>
        <Pixels rows={syringe} />
        Cadastro de CPS
        <WindowControls dark />
      </DialogTitle>
      <SearchArea>
        <SearchRow>
          <Label $w={76} htmlFor="procurar">Procurar por</Label>
          <Field $w={593} id="procurar" />
        </SearchRow>
        <SearchRow>
          <Label $w={76} htmlFor="matricula">Matricula</Label>
          <Field $w={212} id="matricula" />
          <Label $w={79} htmlFor="identidade">Identidade</Label>
          <Field $w={225} id="identidade" />
          <SearchButton>
            <Pixels rows={hand} />
            Buscar
          </SearchButton>
        </SearchRow>
      </SearchArea>
      <PatientGrid>
        <Grid $head={c.teal} $headH={20} $headSize={13}>
          <colgroup>
            {[12, 75, 355, 83, 105, 83, 41, 38].map((w, i) => <col key={i} width={w} />)}
          </colgroup>
          <thead>
            <tr>
              <th aria-label="Atual" />
              <th>Codigo</th><th>Nome do Paciente</th><th>Nascimento</th><th>Matricula</th>
              <th>Nascimento</th><th>Idade</th><th>Sexo</th>
            </tr>
          </thead>
          <tbody>
            {patients.map(([code, name, born, reg, age, sex], i) => (
              <PatientRow key={code} $on={i === 0} $alt={i % 2 === 0}>
                <td>{i === 0 && <Marker />}</td>
                <NumCell>{code}</NumCell>
                <td>{name}</td><td>{born}</td><td>{reg}</td><td>{born}</td>
                <NumCell>{age}</NumCell>
                <td>{sex}</td>
              </PatientRow>
            ))}
          </tbody>
        </Grid>
        <ScrollV>
          <ScrollButton aria-label="Acima"><Chevron d="up" /></ScrollButton>
          <Thumb $w={15} $h={17} />
          <ScrollButton $end aria-label="Abaixo"><Chevron d="down" /></ScrollButton>
        </ScrollV>
      </PatientGrid>
      <ListTitle>Lista de Atendimentos</ListTitle>
      <div>
        <Grid $head={c.teal} $headH={19} $headSize={12}>
          <colgroup>
            <col width={12} />
            {visits.map(([n, w]) => <col key={n} width={w} />)}
          </colgroup>
          <thead>
            <tr><th aria-label="Atual" />{visits.map(([n]) => <th key={n}>{n}</th>)}</tr>
          </thead>
          <tbody>
            <tr><td />{visits.map(([n]) => <td key={n} />)}</tr>
          </tbody>
        </Grid>
      </div>
    </Dialog>
  );
}

export default function App() {
  return (
    <Page>
      <GlobalStyle />
      <TitleBar>
        <AppIcon><Pixels rows={syringe} /></AppIcon>
        WEBMEDICAL - Sistema de Controle Hospitalar HOSPITAL REG CHAPADA - [Comprovante de Prestação de Serviço  (CPS)]
        <WindowControls />
      </TitleBar>
      <MenuBar>
        {["Cadastros", "Marcação", "Atendimento", "Relatórios", "Utilitários"].map((m) => (
          <a href="#menu" key={m}><Mnemonic>{m[0]}</Mnemonic>{m.slice(1)}</a>
        ))}
        <a href="#menu">A<Mnemonic>j</Mnemonic>uda</a>
      </MenuBar>
      <Banner>
        <Temple />
        <div>
          <BannerTitle>Atendimentos Convênios</BannerTitle>
          <BannerSub>CopyRight© GA Informática - (71) 3035-5051</BannerSub>
        </div>
        <BannerTools>
          <PlainButton aria-label="Voltar"><Arrow /></PlainButton>
          <PlainButton aria-label="Adicionar pessoa"><AddPerson /></PlainButton>
          <PlainButton aria-label="Médico"><Caduceus /></PlainButton>
          <PlainButton aria-label="Agenda"><Clock /></PlainButton>
          <PlainButton aria-label="Recepção"><Desk /></PlainButton>
          <PlainButton aria-label="Localizar"><SearchPages /></PlainButton>
          <BannerTight>
            <PlainButton aria-label="SMS"><Sms /></PlainButton>
            <PlainButton aria-label="E-mail"><MailGlobe /></PlainButton>
            <PlainButton aria-label="Cadastro"><Card /></PlainButton>
          </BannerTight>
        </BannerTools>
      </Banner>
      <GreenBar>
        <Label $w={60} htmlFor="atend">Atend.</Label>
        <Field $w={66} $right id="atend" defaultValue="21925" />
        <Tools>
          <PlainButton aria-label="Primeiro"><Pixels rows={hand} /></PlainButton>
          <PlainButton aria-label="Pesquisar"><Pixels rows={hand} /></PlainButton>
          <PlainButton aria-label="Ir"><Pixels rows={goBlue} /></PlainButton>
          <PlainButton aria-label="Formas"><Pixels rows={shapes} /></PlainButton>
          <PlainButton aria-label="Último"><Pixels rows={hand} /></PlainButton>
        </Tools>
        <CalcSlot>
          <PlainButton aria-label="Calculadora"><Pixels rows={calculator} /></PlainButton>
        </CalcSlot>
        <Conferido><Check />Conferido</Conferido>
        <Priority>
          <PriorityText>Prioridade</PriorityText>
          <PlainButton aria-label="Ajuda"><Question /></PlainButton>
          <PlainButton aria-label="Calendário"><Pixels rows={calendar} /></PlainButton>
          <PlainButton aria-label="Apontar"><Pixels rows={pointHand} /></PlainButton>
          <PlainButton aria-label="Manual"><Question reader /></PlainButton>
        </Priority>
      </GreenBar>
      <FormArea>
        <FormColumn>
          <FormRow>
            <Label $w={64} htmlFor="convenio">Convênio</Label>
            <Field $w={65} $bg="#e0ecf8" id="convenio" defaultValue="1" />
            <Combo id="nome-convenio" value="SUS" w={331} gap={2} />
            <Label $w={32} htmlFor="tipo">Tipo</Label>
            <Combo id="tipo" value="AIH" w={119} />
            <Label $w={43} htmlFor="plano">Plano</Label>
            <Combo id="plano" value="" w={204} />
          </FormRow>
          <FormRow>
            <Label $w={64} htmlFor="paciente">Paciente</Label>
            <Field $w={77} $right id="paciente" defaultValue="22845" />
            <MiniButton $off aria-label="Procurar">
              <svg width="14" height="12"><path d="M1 11V7l2-4h2l1 3h2l1-3h2l2 4v4H9V8H5v3z" fill="#a0a0a0" stroke="#f8f8f8" strokeWidth=".7" /></svg>
            </MiniButton>
            <MiniButton $off aria-label="Novo">
              <svg width="12" height="14"><path d="M1 1h6l4 4v8H1zM7 1v4h4" fill="#ddd" stroke="#a0a0a0" /></svg>
            </MiniButton>
            <MiniButton aria-label="Anotações"><Pixels rows={notepad} /></MiniButton>
            <MiniButton aria-label="Imprimir"><Pixels rows={redPrinter} /></MiniButton>
            <PatientName>LUCIMAR BATISTA SILVA BRITO</PatientName>
            <Label $w={29} htmlFor="data-at">Data</Label>
            <Field $w={89} id="data-at" defaultValue="16/11/2021" />
            <Label $w={31} htmlFor="hora">Hora</Label>
            <Field $w={42} id="hora" defaultValue="10:07" />
          </FormRow>
          <FormRow>
            <Label $w={64} htmlFor="cns">Mat/CNS</Label>
            <Field $w={300} id="cns" defaultValue="700002356984202" />
          </FormRow>
          <Requester>
            <legend>Dados do Solicitante (Se houver)</legend>
            <FormRow $tight>
              <Label $w={34} htmlFor="data-sol">Data</Label>
              <Field $w={101} id="data-sol" defaultValue="16/11/2021" />
              <Label $w={29} htmlFor="rcp">RCP</Label>
              <Field $w={120} id="rcp" defaultValue="01" />
            </FormRow>
            <FormRow $tight>
              <Label $w={86} htmlFor="cnpj">CNPJ/CPF</Label>
              <Field $w={240} id="cnpj" defaultValue="01891882511" />
            </FormRow>
            <FormRow $tight>
              <Label $w={86} htmlFor="esp">Especialidade</Label>
              <Field $w={240} id="esp" defaultValue="CLINICO" />
            </FormRow>
          </Requester>
        </FormColumn>
        <LogoSlot><Sus /></LogoSlot>
        <PhotoSlot><Portrait /></PhotoSlot>
      </FormArea>
      <Work>
        <SideTabs>
          <SideTab $h={106} $on>Honor. e Taxas</SideTab>
          <SideTab $h={66}>Mat/Med.</SideTab>
          <SideTab $h={72}>SUS - AIH</SideTab>
        </SideTabs>
        <Panel>
          <PanelInner>
            <PanelBar>
              <label htmlFor="apresentacao">Mudar</label>
              <Check id="apresentacao" defaultChecked />
              <label htmlFor="apresentacao">Apresentação</label>
              <PanelBox aria-label="Apresentação" />
            </PanelBar>
            <GridArea>
              <GridMain>
                <Grid $head={c.green} $headH={20} $headSize={13} $full>
                  <colgroup>
                    <col width={12} /><col width={20} /><col width={89} /><col /><col width={60} />
                    <col width={53} /><col width={88} /><col width={21} />
                  </colgroup>
                  <thead>
                    <tr>
                      <th aria-label="Atual" /><th aria-label="Grupo" /><th>Codigo</th><th>Descrição</th>
                      <HeadRight>Hora</HeadRight><th>Serviço</th><th>Classificação</th><th>Ordem</th>
                    </tr>
                  </thead>
                  <tbody>
                    {[true, false].map((on) => (
                      <ItemRow key={String(on)} $on={on}>
                        <td>{on && <Marker />}</td><td>03</td><td>01.06.008-8</td><td>DIAGNOSTICO</td>
                        <td /><td /><td /><td />
                      </ItemRow>
                    ))}
                  </tbody>
                </Grid>
              </GridMain>
              <ScrollV>
                <ScrollButton aria-label="Acima"><Chevron d="up" /></ScrollButton>
                <Thumb $w={15} $h={173} />
                <ScrollButton $end aria-label="Abaixo"><Chevron d="down" /></ScrollButton>
              </ScrollV>
            </GridArea>
            <ScrollH>
              <ScrollButton aria-label="Esquerda"><Chevron d="left" /></ScrollButton>
              <Thumb $w={17} $h={15} />
              <ScrollButton $end aria-label="Direita"><Chevron d="right" /></ScrollButton>
            </ScrollH>
          </PanelInner>
        </Panel>
        <RightTools>
          {sideIcons.map(([n, icon]) => <RightTool key={n} aria-label={n}>{icon}</RightTool>)}
        </RightTools>
      </Work>
      <TabBar>
        {tabs.map(([n, w], i) => <Tab key={n} $w={w} $on={i === 0}>{n}</Tab>)}
      </TabBar>
      <Totals>
        <Total $gap={4}>Honorários<Field $w={100} $right $flat readOnly value="44,22" /></Total>
        <Total $gap={112}>Mat/Med<Field $w={100} $right $flat readOnly value="0,00" /></Total>
        <Total $gap={5}>Desc. nos Itens/Glosa<Field $w={135} $right $flat readOnly value="0,00" /></Total>
        <Total $gap={6}>Valor Líquido*<Field $w={103} $right $flat readOnly value="44,22" /></Total>
        <TotalNote>* Valor liquido s/ Desconto nos itens</TotalNote>
      </Totals>
      <Actions>
        <Group>
          <GroupName $strong>Navegando...</GroupName>
          <Buttons $gap={3}>
            <ToolButton aria-label="Primeiro"><NavArrow dir="left" bar /></ToolButton>
            <ToolButton aria-label="Anterior"><NavArrow dir="left" /></ToolButton>
            <ToolButton aria-label="Próximo"><NavArrow dir="right" /></ToolButton>
            <ToolButton aria-label="Último"><NavArrow dir="right" bar /></ToolButton>
          </Buttons>
        </Group>
        <Group>
          <GroupName>Ação</GroupName>
          <Buttons>
            <ToolButton aria-label="Novo"><NewDoc /></ToolButton>
            <ToolButton aria-label="Editar"><Pencil /></ToolButton>
            <ToolButton aria-label="Excluir"><Basket /></ToolButton>
          </Buttons>
        </Group>
        <Group>
          <GroupName>Confirmação</GroupName>
          <Buttons>
            <ToolButton $off aria-label="Salvar"><Floppy /></ToolButton>
            <ToolButton $off aria-label="Cancelar"><StopHand /></ToolButton>
          </Buttons>
        </Group>
        <OpenGroup>
          <SendTo><Check />Enviar para Impressora</SendTo>
          <Buttons $gap={4}>
            <ToolButton $w={108}><Printer />Ficha de Atendimento</ToolButton>
            <ToolButton $w={94}><Printer />Conta Médica II</ToolButton>
            <Buttons>
              <TermBox>
                <ToolButton $w={55}>Termo</ToolButton>
                <Check aria-label="Termo 1" />
                <Check aria-label="Termo 2" />
              </TermBox>
              <ToolButton $w={49}>Exames</ToolButton>
            </Buttons>
          </Buttons>
        </OpenGroup>
        <GuideButtons>
          <ToolButton $w={105} $h={53}>Guia de Autorização</ToolButton>
          <ToolButton $w={75} $h={53}>Cancela Guia</ToolButton>
        </GuideButtons>
      </Actions>
      <Status>
        <span>Usuário:1 ADMINISTRADOR</span>
        <span>CopyRight© Antonio Ribeiro dos Santos Jr. - Versão: 2.0.6.55</span>
      </Status>
      <PageScroll />
      <SearchDialog />
      <ArrowMark>
        <svg width="178" height="40" viewBox="0 0 178 40" aria-hidden>
          <path d="M5 19.500L87 4v8h86v16H87v8z" fill="none" stroke="#000" strokeWidth="5" />
        </svg>
      </ArrowMark>
      <Note>Pesquisa o nome de algum paciente</Note>
    </Page>
  );
}
